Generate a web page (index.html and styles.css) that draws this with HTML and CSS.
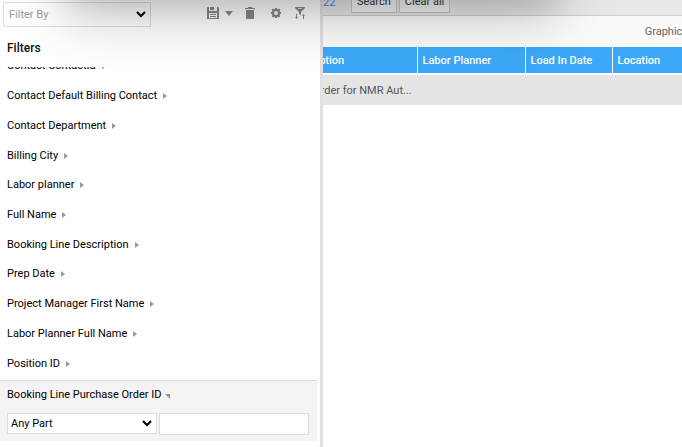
FILE: index.html
```
<!DOCTYPE html>
<html lang="en">

<head>
    <meta charset="UTF-8">
    <meta name="viewport" content="width=device-width, initial-scale=1.0">
    <title>Filters</title>
    <link rel="stylesheet" href="styles.css">
</head>

<body>
    <div class="app">
        <!-- filter panel -->
        <aside class="panel">
            <div class="toolbar">
                <select class="filter-by" aria-label="Filter By">
                    <option>Filter By</option>
                </select>
                <div class="tools">
                    <button class="tool save" title="Save">
                        <svg width="12" height="12" viewBox="0 0 12 12"><path fill="#888" fill-rule="evenodd" d="M0 0h11l1 1v11H0zM2 0v4h8V0zM2 6v5h8V6z"/><path fill="#888" d="M3 0h4v3H3zM3 7h6v1H3zM3 9h6v1H3z"/></svg>
                        <svg width="8" height="5" viewBox="0 0 8 5"><path fill="#888" d="M0 0h8L4 5z"/></svg>
                    </button>
                    <button class="tool trash" title="Delete">
                        <svg width="10" height="12" viewBox="0 0 10 12"><path fill="#888" d="M3 0h4v1h3v1H0V1h3zM1 3h8v9H1z"/></svg>
                    </button>
                    <button class="tool gear" title="Settings">
                        <svg width="10" height="10" viewBox="0 0 10 10"><circle cx="5" cy="5" r="3" fill="none" stroke="#888" stroke-width="2"/><path stroke="#888" stroke-width="2" d="M5 0v2M5 8v2M0 5h2M8 5h2M1.3 1.3l1.4 1.4M7.3 7.3l1.4 1.4M8.7 1.3L7.3 2.7M2.7 7.3L1.3 8.7"/></svg>
                    </button>
                    <button class="tool" title="Sort filters">
                        <svg width="10" height="12" viewBox="0 0 10 12"><path fill="#888" d="M0 0h10v1L6 5v3L4 7V5L0 1zM1 7h1v3h1l-1.5 2L0 10h1zM8 12V9H7l1.5-2L10 9H9v3z"/><path fill="#ddd" d="M3 1h4v1H3z"/></svg>
                    </button>
                </div>
            </div>
            <h2>Filters</h2>
            <div class="filter-scroll">
                <ul class="filter-list">
                    <li>Contact ContactId</li>
                    <li>Contact Default Billing Contact</li>
                    <li>Contact Department</li>
                    <li>Billing City</li>
                    <li>Labor planner</li>
                    <li>Full Name</li>
                    <li>Booking Line Description</li>
                    <li>Prep Date</li>
                    <li>Project Manager First Name</li>
                    <li>Labor Planner Full Name</li>
                    <li>Position ID</li>
                </ul>
            </div>
            <div class="open-filter">
                <label class="open-title" for="orderId">Booking Line Purchase Order ID</label>
                <div class="fields">
                    <select aria-label="Match">
                        <option>Any Part</option>
                    </select>
                    <input id="orderId" type="text">
                </div>
            </div>
        </aside>

        <!-- results -->
        <main class="results">
            <div class="search-bar">
                <a href="#">22</a>
                <button>Search</button>
                <button>Clear all</button>
            </div>
            <div class="view-bar">Graphical</div>
            <table>
                <colgroup>
                    <col class="col-description">
                    <col class="col-planner">
                    <col class="col-date">
                    <col>
                </colgroup>
                <thead>
                    <tr>
                        <th><span class="clipped">Description</span></th>
                        <th>Labor Planner</th>
                        <th>Load In Date</th>
                        <th>Location</th>
                    </tr>
                </thead>
                <tbody>
                    <tr>
                        <td><span class="clipped">Order for NMR Aut...</span></td>
                        <td></td>
                        <td></td>
                        <td></td>
                    </tr>
                </tbody>
            </table>
        </main>
    </div>

    <!-- shadow of the dialog above the page -->
    <div class="dialog-shadow"></div>
</body>

</html>
```
FILE: styles.css
```
* {
    box-sizing: border-box;
}

body {
    margin: 0;
    font-family: Roboto, "Liberation Sans", sans-serif;
    font-size: 11px;
    color: #000;
    background: #fff;
}

button, select, input {
    font-family: inherit;
    font-size: 11px;
}

.app {
    display: flex;
    height: 100vh;
    overflow: hidden;
}

/* Filter panel */
.panel {
    display: flex;
    flex-direction: column;
    flex: 0 0 323px;
    padding-bottom: 6px;
    border-right: 3px solid #e1e1e1;
    background: #fff;
}

.toolbar {
    display: flex;
    align-items: flex-start;
    padding: 2px 12px 0 3px;
}

select {
    appearance: none;
    padding: 0 3px;
    border: 1px solid #ddd;
    border-radius: 0;
    color: #000;
    background: #fff url("data:image/svg+xml,%3Csvg xmlns='http://www.w3.org/2000/svg' width='10' height='7'%3E%3Cpath d='M1 1l4 4 4-4' fill='none' stroke='%23000' stroke-width='2'/%3E%3C/svg%3E") no-repeat right 4px center;
}

.filter-by {
    width: 148px;
    height: 25px;
    padding-left: 5px;
    color: #999;
}

.tools {
    display: flex;
    flex: 1;
    justify-content: flex-end;
    padding: 5px 3px 0 0;
}

.tool {
    display: flex;
    align-items: center;
    height: 12px;
    padding: 0;
    border: 0;
    background: none;
}

.save {
    gap: 6px;
    margin-right: 12px;
}

.trash {
    margin-right: 16px;
}

.gear {
    margin-right: 14px;
}

h2 {
    margin: 12px 0 0 7px;
    font-size: 12px;
    font-weight: 500;
    line-height: 18px;
    color: #111;
}

.filter-scroll {
    display: flex;
    flex: 1;
    margin-top: 10px;
    overflow: hidden;
}

/* Scrolled down by half a row */
.filter-list {
    display: grid;
    flex: 1;
    grid-auto-rows: 1fr;
    margin: -16px 0 2px;
    padding: 0 0 0 7px;
    list-style: none;
}

.filter-list li {
    display: flex;
    align-items: center;
}

.filter-list li::after {
    content: "";
    margin: 1px 0 0 6px;
    border: 3px solid transparent;
    border-left: 4px solid #999;
    border-right: 0;
}

.open-filter {
    margin-right: 3px;
    padding: 5px 8px 6px 7px;
    border-top: 1px solid #ddd;
    background: #f5f3f4;
}

.open-title {
    display: flex;
    align-items: center;
    height: 16px;
}

.open-title::after {
    content: "";
    margin: 4px 0 0 4px;
    border-top: 5px solid #999;
    border-left: 5px solid transparent;
}

.fields {
    display: flex;
    gap: 2px;
    margin-top: 11px;
}

.fields select {
    width: 150px;
    height: 21px;
}

.fields input {
    flex: 1;
    min-width: 0;
    height: 22px;
    border: 1px solid #ddd;
}

/* Results */
.results {
    flex: 1;
    min-width: 0;
    overflow: hidden;
}

.search-bar {
    display: flex;
    gap: 2px;
    height: 16px;
    border-bottom: 1px solid #ccc;
    background: #e9e9e9;
}

.search-bar a {
    width: 26px;
    margin-top: -4px;
    line-height: 13px;
    color: #3f87d9;
    text-decoration: none;
}

.search-bar button {
    height: 24px;
    margin-top: -11px;
    padding: 0 5px;
    border: 1px solid #c8c8c8;
    color: #333;
    background: #f5f5f5;
}

.view-bar {
    height: 31px;
    margin-right: -9px;
    line-height: 32px;
    text-align: right;
    color: #666;
    background: #fbfbfb;
}

table {
    width: 100%;
    table-layout: fixed;
    border-collapse: collapse;
}

.col-description {
    width: 94px;
}

.col-planner {
    width: 108px;
}

.col-date {
    width: 87px;
}

th {
    height: 27px;
    padding: 0 5px;
    border-right: 1px solid #fff;
    font-weight: 500;
    text-align: left;
    color: #fff;
    background: #3ba9f8;
}

th:last-child {
    border-right: 0;
}

td {
    height: 31px;
    padding: 0 5px;
    border-top: 2px solid #fff;
    color: #555;
    background: #e5e5e5;
}

th:first-child,
td:first-child {
    padding: 0;
}

/* Text that runs in under the filter panel */
.clipped {
    display: block;
    overflow: hidden;
    white-space: nowrap;
}

th .clipped {
    text-indent: -35px;
}

td .clipped {
    text-indent: -10px;
}

.dialog-shadow {
    position: fixed;
    top: -80px;
    left: 65px;
    right: 122px;
    height: 80px;
    box-shadow: 0 14px 60px rgba(0, 0, 0, .26), 0 8px 24px rgba(0, 0, 0, .08);
    pointer-events: none;
}
```
